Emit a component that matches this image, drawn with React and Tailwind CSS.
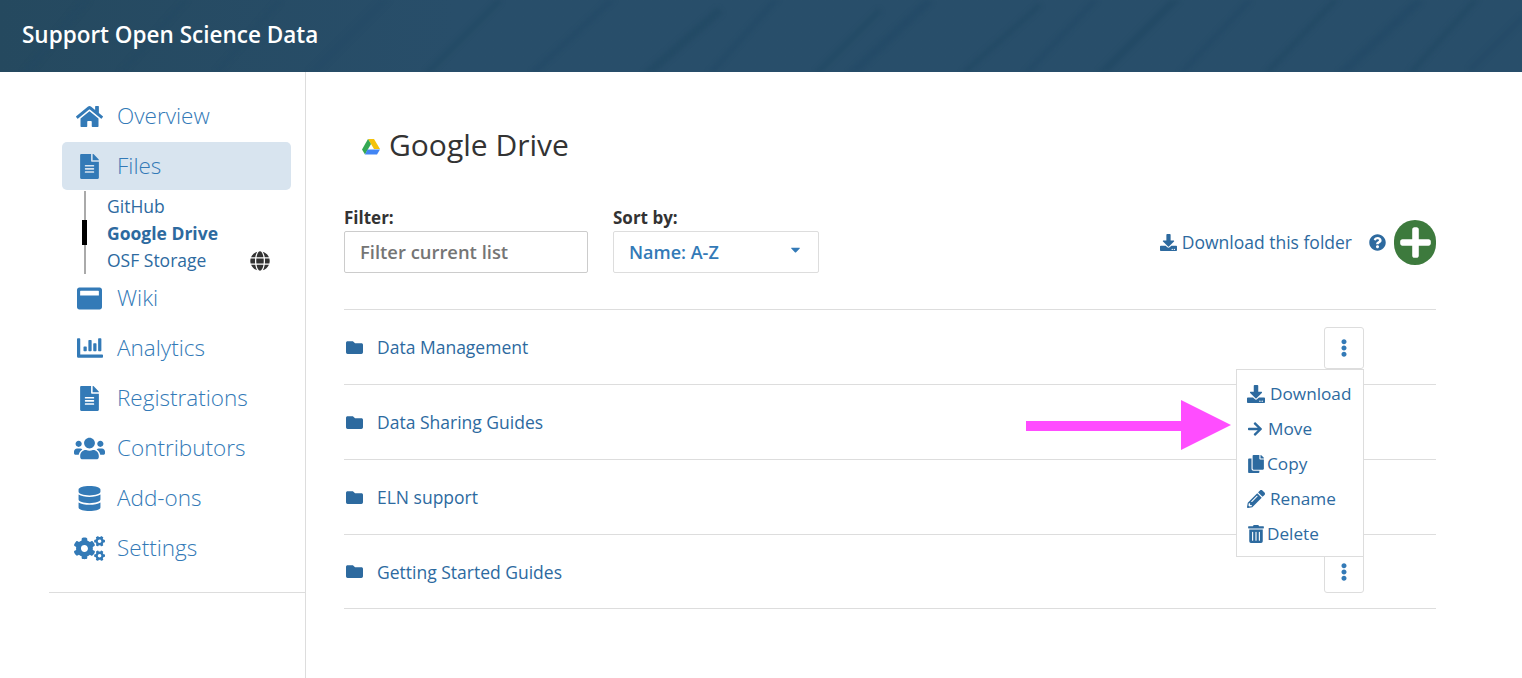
import React from "react";
import {
  FaHome, FaFileAlt, FaWindowMaximize, FaChartBar, FaUsers, FaDatabase, FaCogs, FaGlobe,
  FaDownload, FaArrowRight, FaCopy, FaPencilAlt, FaTrashAlt, FaFolder, FaQuestionCircle,
  FaPlus, FaEllipsisV, FaCaretDown,
} from "react-icons/fa";

const streaks = [
  [20,80,90,-5],[110,85,190,-5],[210,80,280,0],[300,85,390,-5],[420,80,500,0],[520,85,620,-8],
  [640,80,720,10],[700,85,780,-5],[800,90,880,10],[850,75,930,0],[950,85,1040,5],[1020,80,1100,-5],
  [1100,75,1180,-5],[1170,85,1250,0],[1260,80,1340,-5],[1340,75,1420,0],[1400,85,1480,-5],[1470,70,1530,10],
];

function Streaks() {
  return (
    <svg className="absolute inset-0 w-full h-full blur-[2px]" viewBox="0 0 1522 72" preserveAspectRatio="none" aria-hidden="true">
      {streaks.map(([a, b, c, d], i) => (
        <line key={i} x1={a} y1={b} x2={c} y2={d} stroke="#1f4763" strokeOpacity={i < 4 ? 0.2 : i % 2 ? 0.4 : 0.6} strokeWidth={i % 3 === 0 ? 8 : 5} />
      ))}
    </svg>
  );
}

function NavItem({ icon: Icon, size, label, active }) {
  return (
    <a className={`flex items-center rounded-[5px] text-[#337ab7] ${active ? "h-[48px] mt-px bg-[#d8e4ef]" : "h-[50px]"}`}>
      <span className="w-[55px] flex justify-center shrink-0 text-[#337ab7]">
        <Icon style={{ fontSize: size }} />
      </span>
      <span className="text-[22.5px] font-light leading-none">{label}</span>
    </a>
  );
}

function Kebab() {
  return (
    <button className="w-10 h-[42px] flex items-center justify-center border border-[#dddddd] rounded-[3px] bg-white text-[#337ab7]">
      <FaEllipsisV className="text-[18px]" />
    </button>
  );
}

function MenuItem({ icon: Icon, label, size, gap }) {
  return (
    <a className="flex items-center h-[35px] text-[#2d6a9f] text-[17.2px]">
      <Icon style={{ fontSize: size, marginRight: gap }} />
      {label}
    </a>
  );
}

function Row({ label, last, children }) {
  return (
    <div className={`relative flex items-center border-t border-[#dddddd] text-[#2d6a9f] text-[17.5px] ${last ? "h-[74px]" : "h-[75px]"}`}>
      <FaFolder className="text-[17px] ml-[2px] mr-[15px]" />
      <span className="flex-1 pt-px -ml-px">{label}</span>
      {children}
    </div>
  );
}

export default function App() {
  return (
    <div className="min-h-[678px] h-[678px] overflow-hidden bg-white font-['Open_Sans',sans-serif] text-[#333333]">
      <header className="relative h-[72px] bg-linear-to-r from-[#25495f] to-[#284e6a] to-30% overflow-hidden flex items-center pl-[22px] pb-[2px]">
        <Streaks />
        <h1 className="relative text-[22.5px] font-semibold text-white leading-none">Support Open Science Data</h1>
      </header>

      <div className="flex h-[606px]">
        <aside className="w-[306px] shrink-0 border-r border-[#dddddd] pt-[19px] pl-[49px]">
          <div className="border-b border-[#dddddd] pb-[19px]">
            <nav className="pl-[13px] w-[242px]">
              <NavItem icon={FaHome} size={27} label="Overview" />
              <NavItem icon={FaFileAlt} size={25} label="Files" active />
              <div className="relative mt-[3px] mb-[-1px] h-[81px] pl-[45px] text-[#2d6a9f] text-[17.5px]">
                <span className="absolute left-[22px] top-[-2px] bottom-0 w-[2px] bg-[#aaaaaa]" />
                <span className="absolute left-[20px] top-[27px] h-[25px] w-[5px] bg-black" />
                <a className="flex items-center h-[27px]">GitHub</a>
                <a className="flex items-center h-[27px] font-bold">Google Drive</a>
                <a className="flex items-center justify-between h-[27px]">
                  OSF Storage
                  <FaGlobe className="text-[20px] text-[#333333] mr-[21px]" />
                </a>
              </div>
              <NavItem icon={FaWindowMaximize} size={25} label="Wiki" />
              <NavItem icon={FaChartBar} size={26} label="Analytics" />
              <NavItem icon={FaFileAlt} size={25} label="Registrations" />
              <NavItem icon={FaUsers} size={31} label="Contributors" />
              <NavItem icon={FaDatabase} size={25} label="Add-ons" />
              <NavItem icon={FaCogs} size={31} label="Settings" />
            </nav>
          </div>
        </aside>

        <main className="flex-1 pl-[38px] pr-[86px]">
          <div className="flex items-center h-[36px] mt-[55px] pl-[18px]">
            <svg width="18" height="16" viewBox="0 0 18 16" className="mr-[9px] mt-[4px]" aria-hidden="true">
              <polygon points="6,0 12,0 18,10 12,10" fill="#f4c20d" />
              <polygon points="6,0 9,5 3,15.5 0,10.5" fill="#34a853" />
              <polygon points="5.5,10.5 18,10.5 15,15.5 3,15.5" fill="#4285f4" />
            </svg>
            <h2 className="text-[30px] leading-none text-[#333333]">Google Drive</h2>
          </div>

          <div className="flex items-end mt-[40px] h-[70px]">
            <div className="w-[244px] mr-[25px]">
              <label className="block text-[17px] font-bold leading-[22px] mb-[2px]">Filter:</label>
              <div className="h-[42px] flex items-center border border-[#cccccc] rounded-[2px] pl-[15px] text-[18.4px] font-semibold text-[#757575]">
                Filter current list
              </div>
            </div>
            <div className="w-[206px]">
              <label className="block text-[17px] font-bold leading-[22px] mb-[2px]">Sort by:</label>
              <div className="h-[42px] flex items-center justify-between border border-[#dddddd] rounded-[2px] pl-[15px] pr-[15px] text-[18px] font-semibold text-[#337ab7]">
                Name: A-Z
                <FaCaretDown className="text-[15px] mb-[6px]" />
              </div>
            </div>
            <div className="flex-1 flex items-center justify-end h-[42px] mb-[10px]">
              <a className="flex items-center text-[17.5px] text-[#2d6a9f]">
                <FaDownload className="text-[17px] mr-[5px]" />
                Download this folder
              </a>
              <FaQuestionCircle className="text-[17px] text-[#2d6a9f] ml-[17px] mr-[8px]" />
              <span className="w-[42px] h-[45px] rounded-full bg-[#3d7a3d] flex items-center justify-center text-white">
                <FaPlus className="text-[35px]" />
              </span>
            </div>
          </div>

          <div className="mt-[36px] border-b border-[#dddddd]">
            <Row label="Data Management">
              <div className="relative mr-[72px] mt-[2px]">
                <Kebab />
                <div className="absolute z-10 right-0 top-[42px] w-[128px] h-[188px] bg-white border border-[#dddddd] pl-[10px] pt-[6px]">
                  <MenuItem icon={FaDownload} label="Download" size={18} gap={5} />
                  <MenuItem icon={FaArrowRight} label="Move" size={16} gap={5} />
                  <MenuItem icon={FaCopy} label="Copy" size={18} gap={2} />
                  <MenuItem icon={FaPencilAlt} label="Rename" size={18} gap={5} />
                  <MenuItem icon={FaTrashAlt} label="Delete" size={18} gap={2} />
                </div>
              </div>
            </Row>
            <Row label="Data Sharing Guides">
              <svg className="absolute z-20 left-[682px] top-[15px]" width="206" height="50" viewBox="0 0 206 50" aria-hidden="true">
                <polygon points="0,21 155,21 155,0 205,25 155,50 155,31 0,31" fill="#ff4dff" />
              </svg>
            </Row>
            <Row label="ELN support" />
            <Row label="Getting Started Guides" last>
              <div className="mr-[72px]"><Kebab /></div>
            </Row>
          </div>
        </main>
      </div>
    </div>
  );
}
